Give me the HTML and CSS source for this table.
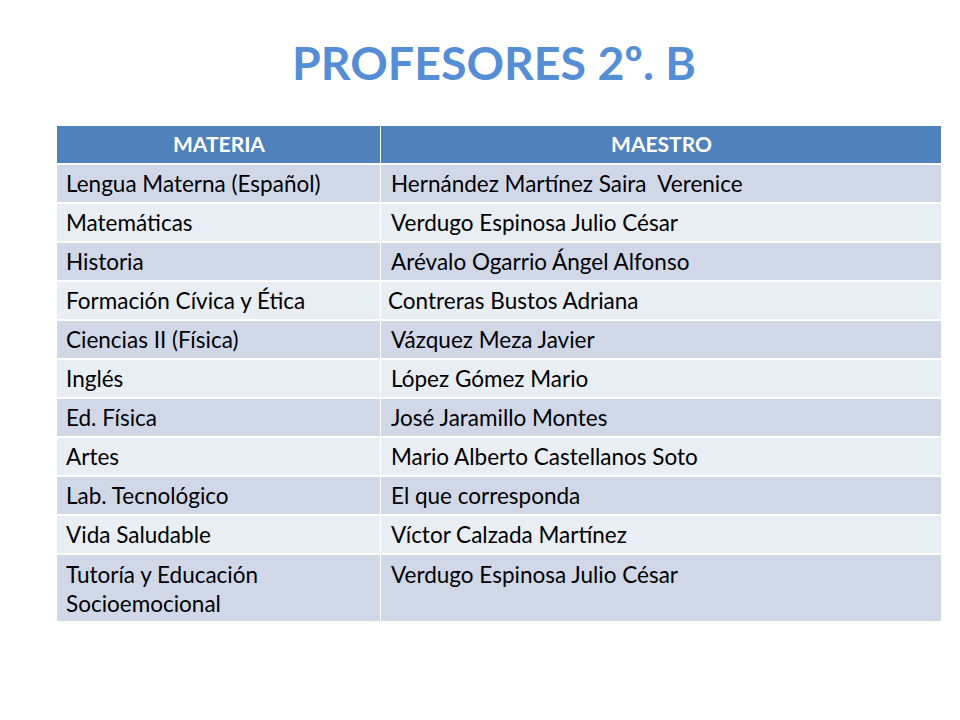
FILE: index.html
```html
<!DOCTYPE html>
<html lang="es">
<head>
<meta charset="utf-8">
<title>PROFESORES 2º. B</title>
<link rel="stylesheet" href="styles.css">
</head>
<body>
<div class="slide">
  <h1 class="title">PROFESORES 2º. B</h1>
  <table class="grid">
    <thead>
      <tr><th class="c1">MATERIA</th><th class="c2">MAESTRO</th></tr>
    </thead>
    <tbody>
      <tr><td>Lengua Materna (Español)</td><td>Hernández Martínez Saira&nbsp; Verenice</td></tr>
      <tr><td>Matemáticas</td><td>Verdugo Espinosa Julio César</td></tr>
      <tr><td>Historia</td><td>Arévalo Ogarrio Ángel Alfonso</td></tr>
      <tr><td>Formación Cívica y Ética</td><td class="shift">Contreras Bustos Adriana</td></tr>
      <tr><td>Ciencias II (Física)</td><td>Vázquez Meza Javier</td></tr>
      <tr><td>Inglés</td><td>López Gómez Mario</td></tr>
      <tr><td>Ed. Física</td><td>José Jaramillo Montes</td></tr>
      <tr><td>Artes</td><td>Mario Alberto Castellanos Soto</td></tr>
      <tr><td>Lab. Tecnológico</td><td>El que corresponda</td></tr>
      <tr><td>Vida Saludable</td><td>Víctor Calzada Martínez</td></tr>
      <tr class="tall"><td>Tutoría y Educación<br>Socioemocional</td><td>Verdugo Espinosa Julio César</td></tr>
    </tbody>
  </table>
</div>
</body>
</html>
```
FILE: styles.css
```css
html, body {
  margin: 0;
  padding: 0;
  background: #ffffff;
}
.slide {
  width: 960px;
  height: 720px;
  box-sizing: border-box;
  padding-top: 32px;
  font-family: Lato, "Open Sans", sans-serif;
}
.title {
  margin: 0 0 34px 0;
  padding-left: 28px;
  text-align: center;
  font-size: 46.5px;
  line-height: 60px;
  font-weight: 700;
  color: #558ed5;
}
.grid {
  margin-left: 57px;
  width: 884px;
  border-collapse: collapse;
  font-family: Lato, "Open Sans", sans-serif;
  font-size: 22.5px;
  color: #000;
}
.grid th, .grid td {
  border: 2px solid #ffffff;
  border-left-width: 1px;
  border-right-width: 1px;
  text-align: left;
  vertical-align: top;
  padding: 6px 8px 0 9px;
  height: 31px;
  line-height: 26px;
}
.grid tr > :first-child { border-left: 0; }
.grid tr > :last-child { border-right: 0; }
.grid thead th {
  background: #4f81bd;
  color: #ffffff;
  font-weight: 700;
  font-size: 21px;
  text-align: center;
  height: 32px;
  border-top: 0;
  padding-top: 5px;
}
.grid .c1 { width: 306px; }
.grid td:nth-child(2) { padding-left: 10px; }
.grid td.shift { padding-left: 7px; }
.grid tbody tr:nth-child(odd) td { background: #d0d8e8; }
.grid tbody tr:nth-child(even) td { background: #e9edf4; }
.grid tr.tall td { height: 61px; line-height: 29px; padding-top: 5px; }
```
